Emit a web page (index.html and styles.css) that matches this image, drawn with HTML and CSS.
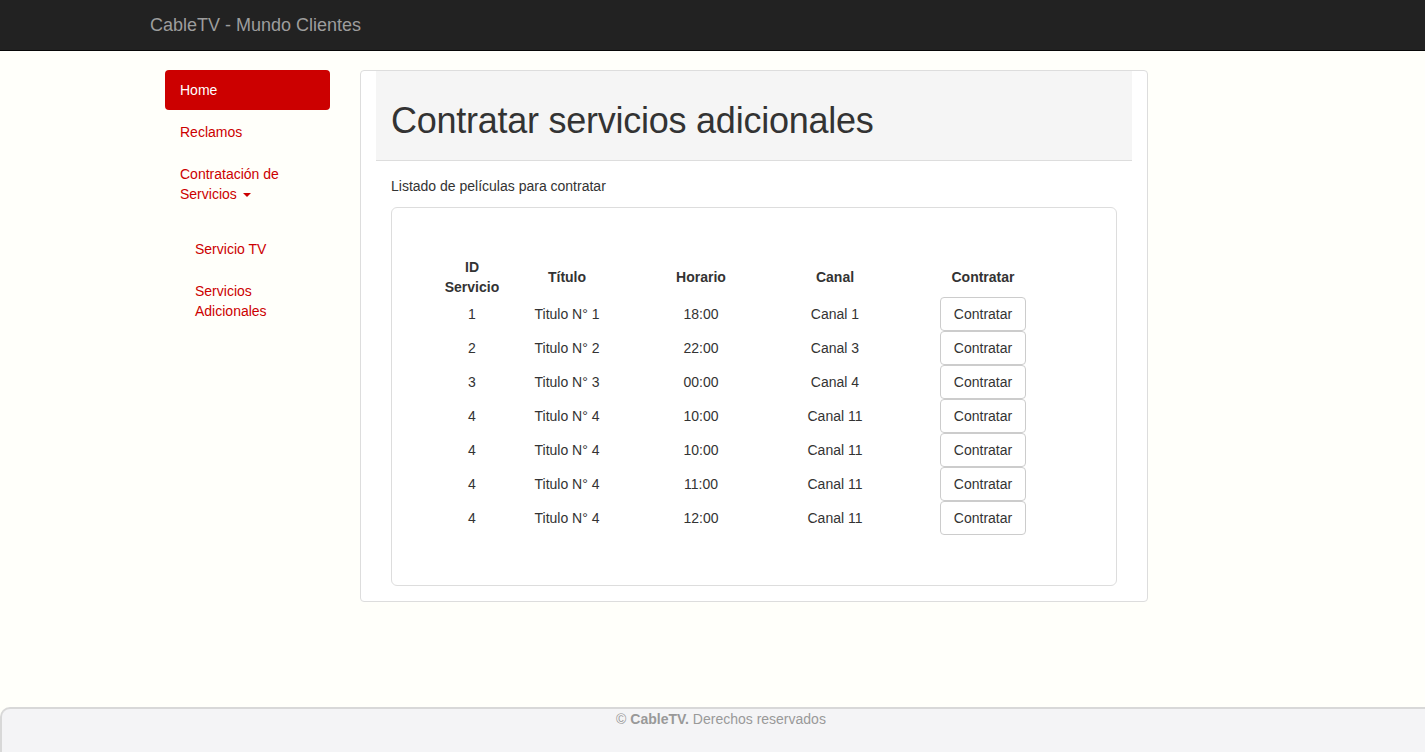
FILE: index.html
```html
<!DOCTYPE html>
<html lang="es">
<head>
<meta charset="utf-8">
<title>CableTV - Mundo Clientes</title>
<link rel="stylesheet" href="styles.css">
</head>
<body>
<div class="layout">
  <header class="navbar">
    <a class="brand" href="#">CableTV - Mundo Clientes</a>
  </header>

  <div class="page">
    <aside class="sidebar">
      <ul class="nav">
        <li class="active"><a href="#">Home</a></li>
        <li><a href="#">Reclamos</a></li>
        <li><a href="#">Contratación de Servicios <span class="caret"></span></a></li>
      </ul>
      <ul class="nav subnav">
        <li><a href="#">Servicio TV</a></li>
        <li><a href="#">Servicios Adicionales</a></li>
      </ul>
    </aside>

    <main class="main">
      <div class="panel">
        <div class="panel-header">
          <h1>Contratar servicios adicionales</h1>
        </div>
        <div class="panel-body">
          <p class="lead-text">Listado de películas para contratar</p>
          <div class="inner-panel">
            <table class="table">
              <colgroup>
                <col class="c-id">
                <col class="c-title">
                <col class="c-time">
                <col class="c-chan">
                <col class="c-act">
              </colgroup>
              <thead>
                <tr>
                  <th>ID<br>Servicio</th>
                  <th>Título</th>
                  <th>Horario</th>
                  <th>Canal</th>
                  <th>Contratar</th>
                </tr>
              </thead>
              <tbody>
                <tr><td>1</td><td>Titulo N° 1</td><td>18:00</td><td>Canal 1</td><td><button class="btn">Contratar</button></td></tr>
                <tr><td>2</td><td>Titulo N° 2</td><td>22:00</td><td>Canal 3</td><td><button class="btn">Contratar</button></td></tr>
                <tr><td>3</td><td>Titulo N° 3</td><td>00:00</td><td>Canal 4</td><td><button class="btn">Contratar</button></td></tr>
                <tr><td>4</td><td>Titulo N° 4</td><td>10:00</td><td>Canal 11</td><td><button class="btn">Contratar</button></td></tr>
                <tr><td>4</td><td>Titulo N° 4</td><td>10:00</td><td>Canal 11</td><td><button class="btn">Contratar</button></td></tr>
                <tr><td>4</td><td>Titulo N° 4</td><td>11:00</td><td>Canal 11</td><td><button class="btn">Contratar</button></td></tr>
                <tr><td>4</td><td>Titulo N° 4</td><td>12:00</td><td>Canal 11</td><td><button class="btn">Contratar</button></td></tr>
              </tbody>
            </table>
          </div>
        </div>
      </div>
    </main>
  </div>

  <footer class="footer">
    <span class="copy">© <b>CableTV.</b> Derechos reservados</span>
  </footer>
</div>
</body>
</html>
```

FILE: styles.css
```css
html, body {
  margin: 0;
  padding: 0;
  height: 100%;
  overflow: hidden;
}

body {
  background: #fffffa;
  font-family: "Liberation Sans", Arial, Helvetica, sans-serif;
  font-size: 14px;
  line-height: 20px;
  color: #333;
}

.layout {
  min-height: 100vh;
  display: flex;
  flex-direction: column;
}

.navbar {
  height: 50px;
  background: #222;
  border-bottom: 1px solid #080808;
  display: flex;
  align-items: center;
  padding-left: 150px;
}

.brand {
  font-size: 18px;
  line-height: 20px;
  color: #9d9d9d;
  text-decoration: none;
}

.page {
  display: flex;
  gap: 30px;
  padding-left: 165px;
  padding-top: 19px;
}

.sidebar {
  width: 165px;
  flex: none;
}

.nav {
  list-style: none;
  margin: 0;
  padding: 0;
}

.nav li + li {
  margin-top: 2px;
}

.nav a {
  display: block;
  padding: 10px 15px;
  color: #cc0000;
  text-decoration: none;
  border-radius: 4px;
}

.nav .active a {
  background: #cc0000;
  color: #fff;
}

.caret {
  display: inline-block;
  width: 0;
  height: 0;
  margin-left: 2px;
  vertical-align: middle;
  border-top: 4px solid #cc0000;
  border-left: 4px solid transparent;
  border-right: 4px solid transparent;
}

.subnav {
  margin-top: 15px;
}

.subnav a {
  padding-left: 30px;
}

.main {
  width: 788px;
  flex: none;
}

.panel {
  border: 1px solid #ddd;
  border-radius: 4px;
  padding: 0 15px 15px;
  background: #fff;
}

.panel-header {
  background: #f5f5f5;
  border-bottom: 1px solid #ddd;
  padding: 30px 15px 19px;
}

.panel-header h1 {
  margin: 0;
  font-size: 36px;
  line-height: 40px;
  font-weight: normal;
  letter-spacing: -0.25px;
  color: #333;
}

.panel-body {
  padding: 15px 15px 0;
}

.lead-text {
  margin: 0 0 11px;
}

.inner-panel {
  border: 1px solid #ddd;
  border-radius: 6px;
  padding: 49px 0 50px;
}

.table {
  margin: 0 auto;
  border-collapse: collapse;
  table-layout: fixed;
  width: 638px;
}

.c-id { width: 74px; }
.c-title { width: 116px; }
.c-time { width: 152px; }
.c-chan { width: 116px; }
.c-act { width: 180px; }

.table th,
.table td {
  padding: 0;
  text-align: center;
  vertical-align: middle;
}

.table th {
  font-weight: bold;
  height: 40px;
}

.table td {
  height: 34px;
}

.btn {
  display: inline-block;
  height: 34px;
  width: 86px;
  padding: 6px 0;
  font-family: inherit;
  font-size: 14px;
  line-height: 20px;
  color: #333;
  background: #fff;
  border: 1px solid #ccc;
  border-radius: 4px;
  vertical-align: middle;
}

.footer {
  margin-top: auto;
  height: 45px;
  width: calc(100% + 15px);
  background: #f4f4f6;
  border-top: 2px solid #d8d8d8;
  border-left: 2px solid #d8d8d8;
  border-top-left-radius: 10px;
  text-align: center;
  box-sizing: border-box;
}

.copy {
  color: #999;
  line-height: 20px;
}

.copy b {
  color: #999;
}
```
